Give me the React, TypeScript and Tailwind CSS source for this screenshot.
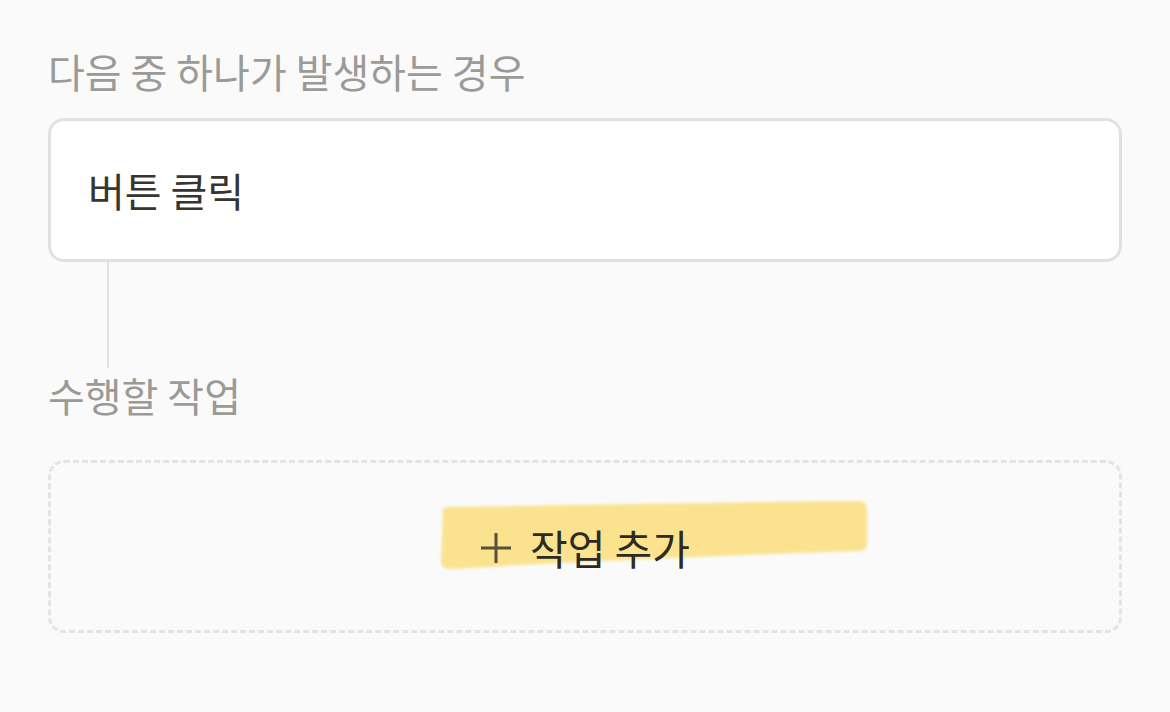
const font = { fontFamily: '"Noto Sans CJK KR", "Noto Sans", sans-serif' }

export default function App() {
  return (
    <div className="min-h-screen bg-[#fafafa] px-12 pt-[44px]" style={font}>
      <div className="text-[40px] leading-[54px] text-[#9b9a97]">다음 중 하나가 발생하는 경우</div>

      <div className="mt-[20px] flex h-[144px] items-center rounded-[16px] border-[3px] border-[#e1e1e1] bg-white px-[37px]">
        <span className="text-[40px] text-[#37352f]">버튼 클릭</span>
      </div>

      <div className="ml-[59px] h-[106px] w-[2px] bg-[#e1e1e1]" />

      <div className="text-[40px] leading-[54px] text-[#9b9a97]">수행할 작업</div>

      <div className="relative mt-[38px] flex h-[173px] items-center justify-center rounded-[16px] border-[3px] border-dashed border-[#e3e3e3]">
        {/* highlighter stroke */}
        <svg
          className="pointer-events-none absolute left-[386px] top-[34px]"
          width="434"
          height="76"
          viewBox="0 0 434 76"
        >
          <defs>
            <filter id="soft" x="-5%" y="-20%" width="110%" height="140%">
              <feGaussianBlur stdDeviation="1.8" />
            </filter>
          </defs>
          <path
            d="M6 14 C 4 12, 8 10, 14 10 C 130 8, 300 5, 422 4 C 428 4, 430 8, 430 14 L 430 48 C 430 52, 426 54, 420 54 C 300 58, 150 64, 14 72 C 8 72, 4 70, 4 64 Z"
            fill="#fbe186"
            fillOpacity="0.92"
            filter="url(#soft)"
          />
        </svg>
        <div className="relative flex items-center gap-[18px] pt-[2px] text-[41px] text-[#2d2a22]">
          <svg width="32" height="32" viewBox="0 0 32 32" className="text-[#57503a]">
            <path d="M16 1v30M1 16h30" stroke="currentColor" strokeWidth="3" />
          </svg>
          <span>작업 추가</span>
        </div>
      </div>
    </div>
  )
}
